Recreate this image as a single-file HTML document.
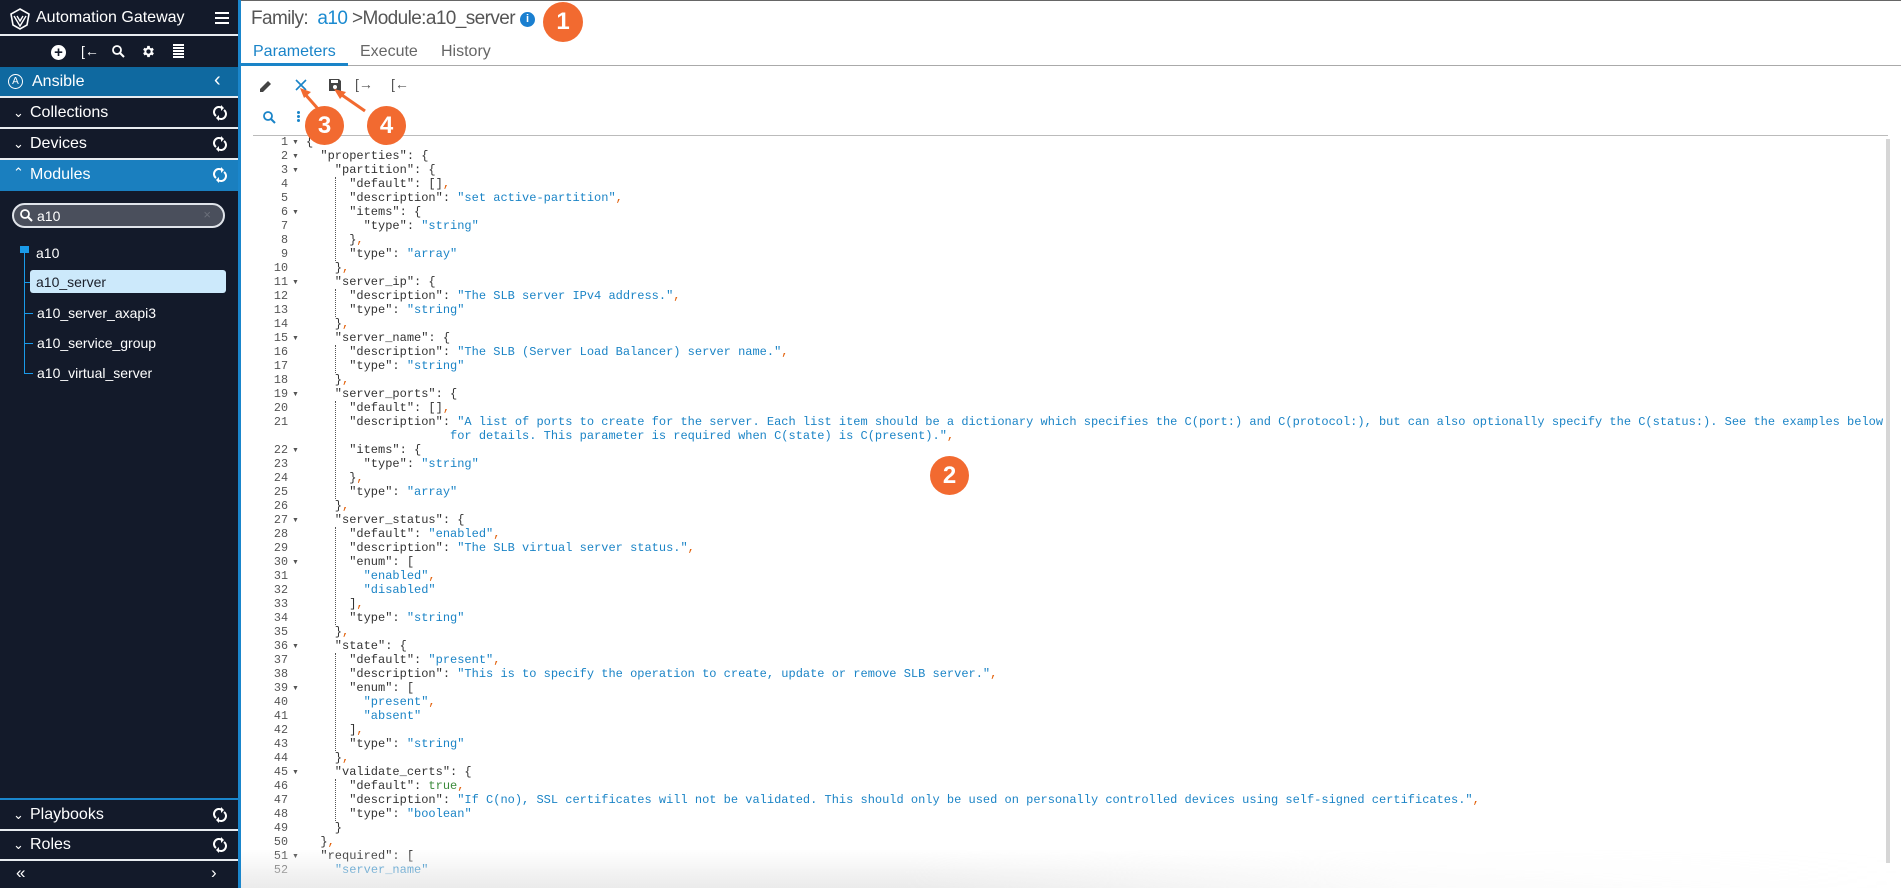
<!DOCTYPE html>
<html><head><meta charset="utf-8"><style>
*{margin:0;padding:0;box-sizing:border-box}
body{width:1901px;height:888px;overflow:hidden;background:#fff;font-family:"Liberation Sans",sans-serif;position:relative}
.sb{position:absolute;left:0;top:0;width:238px;height:888px;background:#131a2a;color:#fff}
.sbb{position:absolute;left:238px;top:0;width:3px;height:888px;background:#1a86cc}
.row{position:absolute;left:0;width:238px;height:31px;font-size:16px;line-height:29px;padding-left:30px;border-bottom:2px solid #e8ecf0}
.row .chev{position:absolute;left:13px;top:0;font-size:13px}
.row .ref{position:absolute;left:213px;top:7px}
.tree{position:absolute;font-size:14px;color:#fff}
.code{position:absolute;left:306px;top:135px;font-family:"Liberation Mono",monospace;font-size:12px;line-height:14px;white-space:pre;color:#333}
.gut{position:absolute;left:240px;top:135px;width:48px;text-align:right;font-family:"Liberation Mono",monospace;font-size:11.75px;line-height:14px;white-space:pre;color:#555}
.s{color:#1b84c6}.c{color:#e2600a}.b{color:#3a8a3a}
.fold{position:absolute;left:292px;font-size:7px;color:#555}
.guide{position:absolute;left:335px;width:0;border-left:1px dotted #555}
.ann{position:absolute;width:39px;height:39px;border-radius:50%;background:#f26a30;color:#fff;font-size:24px;font-weight:bold;text-align:center;line-height:39px}
</style></head><body>
<div class="sb">
  <div style="position:absolute;left:0;top:0;width:238px;height:36px;border-bottom:2px solid #e8ecf0">
    <svg style="position:absolute;left:10px;top:8px" width="20" height="22" viewBox="0 0 20 22"><path d="M10 1 L19 6 L17 17 L10 21 L3 17 L1 6 Z" fill="none" stroke="#fff" stroke-width="1.6"/><path d="M4 8 L10 18 L16 8 M7 8 L10 13 L13 8" fill="none" stroke="#fff" stroke-width="1.4"/></svg>
    <span style="position:absolute;left:36px;top:9px;font-size:16px">Automation Gateway</span>
    <span style="position:absolute;left:215px;top:12px;width:14px;height:2px;background:#fff;box-shadow:0 5px 0 #fff,0 10px 0 #fff"></span>
  </div>
  <div style="position:absolute;left:0;top:38px;width:238px;height:28px;font-size:14px">
    <span style="position:absolute;left:51px;top:7px;width:15px;height:15px;border-radius:50%;background:#fff;color:#131a2a;font-weight:bold;text-align:center;line-height:15px;font-size:15px">+</span>
    <span style="position:absolute;left:81px;top:5px;font-size:14px">[←</span>
    <svg style="position:absolute;left:112px;top:7px" width="13" height="13"><circle cx="5" cy="5" r="4" stroke="#fff" stroke-width="1.8" fill="none"/><path d="M8 8 L12 12" stroke="#fff" stroke-width="2"/></svg>
    <svg style="position:absolute;left:141px;top:6px" width="15" height="15" viewBox="0 0 24 24"><path fill="#fff" d="M19.4 13a7.5 7.5 0 000-2l2.1-1.6-2-3.5-2.5 1a7.3 7.3 0 00-1.7-1L15 3h-4l-.4 2.9a7.3 7.3 0 00-1.7 1l-2.5-1-2 3.5L6.6 11a7.5 7.5 0 000 2l-2.1 1.6 2 3.5 2.5-1a7.300 7.3 0 001.7 1L11 21h4l.4-2.9a7.3 7.3 0 001.7-1l2.5 1 2-3.5zM13 15.5a3.5 3.5 0 110-7 3.5 3.5 0 010 7z" transform="translate(-1 0)"/></svg>
    <span style="position:absolute;left:173px;top:6px;width:11px;height:2px;background:#fff;box-shadow:0 3px 0 #fff,0 6px 0 #fff,0 9px 0 #fff,0 12px 0 #fff"></span>
  </div>
  <div class="row" style="top:67px;background:#0f69a0;padding-left:32px">
    <span style="position:absolute;left:8px;top:7px;width:15px;height:15px;border:1px solid #fff;border-radius:50%;font-size:10px;line-height:13px;text-align:center">A</span>Ansible
    <span style="position:absolute;left:214px;top:-1px;font-size:20px">‹</span>
  </div>
  <div class="row" style="top:98px"><span class="chev">⌄</span>Collections<svg class="ref" width="14" height="16" viewBox="0 0 14 16"><path d="M3 11 A5 5 0 0 1 9 3 M11 5 A5 5 0 0 1 5 13" stroke="#fff" stroke-width="2" fill="none"/><path d="M8 0 L11 3 L8 6Z M6 10 L3 13 L6 16Z" fill="#fff"/></svg></div>
  <div class="row" style="top:129px"><span class="chev">⌄</span>Devices<svg class="ref" width="14" height="16" viewBox="0 0 14 16"><path d="M3 11 A5 5 0 0 1 9 3 M11 5 A5 5 0 0 1 5 13" stroke="#fff" stroke-width="2" fill="none"/><path d="M8 0 L11 3 L8 6Z M6 10 L3 13 L6 16Z" fill="#fff"/></svg></div>
  <div class="row" style="top:160px;background:#1a7fbf;border-bottom:none"><span class="chev" style="top:-2px">⌃</span>Modules<svg class="ref" width="14" height="16" viewBox="0 0 14 16"><path d="M3 11 A5 5 0 0 1 9 3 M11 5 A5 5 0 0 1 5 13" stroke="#fff" stroke-width="2" fill="none"/><path d="M8 0 L11 3 L8 6Z M6 10 L3 13 L6 16Z" fill="#fff"/></svg></div>
  <div style="position:absolute;left:12px;top:203px;width:213px;height:25px;border:2px solid #e0e4ea;border-radius:13px;background:#4a4f5c">
    <svg style="position:absolute;left:6px;top:4px" width="13" height="13"><circle cx="5" cy="5" r="4" stroke="#fff" stroke-width="1.8" fill="none"/><path d="M8 8 L12 12" stroke="#fff" stroke-width="2"/></svg>
    <span style="position:absolute;left:23px;top:3px;font-size:14px">a10</span>
    <span style="position:absolute;right:12px;top:2px;font-size:13px;color:#6a6f7a">×</span>
  </div>
  <div style="position:absolute;left:20px;top:246px;width:9px;height:7px;background:#1a9ae8"></div>
  <div style="position:absolute;left:24px;top:253px;width:1px;height:121px;background:#1a9ae8"></div>
  <div class="tree" style="left:36px;top:245px">a10</div>
  <div style="position:absolute;left:30px;top:270px;width:196px;height:23px;background:#cce9fb;border-radius:3px"></div>
  <div class="tree" style="left:36px;top:274px;color:#1a1f2a">a10_server</div>
  <div class="tree" style="left:37px;top:305px">a10_server_axapi3</div>
  <div class="tree" style="left:37px;top:335px">a10_service_group</div>
  <div class="tree" style="left:37px;top:365px">a10_virtual_server</div>
  <div style="position:absolute;left:24px;top:282px;width:6px;height:1px;background:#1a9ae8"></div>
  <div style="position:absolute;left:24px;top:313px;width:9px;height:1px;background:#1a9ae8"></div>
  <div style="position:absolute;left:24px;top:343px;width:9px;height:1px;background:#1a9ae8"></div>
  <div style="position:absolute;left:24px;top:373px;width:9px;height:1px;background:#1a9ae8"></div>
  <div style="position:absolute;left:0;top:798px;width:238px;height:2px;background:#1a86cc"></div>
  <div class="row" style="top:800px"><span class="chev">⌄</span>Playbooks<svg class="ref" width="14" height="16" viewBox="0 0 14 16"><path d="M3 11 A5 5 0 0 1 9 3 M11 5 A5 5 0 0 1 5 13" stroke="#fff" stroke-width="2" fill="none"/><path d="M8 0 L11 3 L8 6Z M6 10 L3 13 L6 16Z" fill="#fff"/></svg></div>
  <div class="row" style="top:830px"><span class="chev">⌄</span>Roles<svg class="ref" width="14" height="16" viewBox="0 0 14 16"><path d="M3 11 A5 5 0 0 1 9 3 M11 5 A5 5 0 0 1 5 13" stroke="#fff" stroke-width="2" fill="none"/><path d="M8 0 L11 3 L8 6Z M6 10 L3 13 L6 16Z" fill="#fff"/></svg></div>
  <span style="position:absolute;left:16px;top:863px;font-size:17px">«</span>
  <span style="position:absolute;left:211px;top:863px;font-size:17px">›</span>
</div>
<div class="sbb"></div>

<div style="position:absolute;left:241px;top:0;width:1660px;height:1px;background:#666"></div>
<div style="position:absolute;left:251px;top:8px;font-size:19px;color:#555;white-space:nowrap;letter-spacing:-0.6px">Family:&nbsp; <span style="color:#1a8ad0">a10</span> &gt;Module:a10_server</div>
<div style="position:absolute;left:520px;top:12px;width:15px;height:15px;border-radius:50%;background:#1a7fd0;color:#fff;font-size:11px;font-weight:bold;text-align:center;line-height:15px">i</div>
<div style="position:absolute;left:253px;top:43px;font-size:16px;color:#1a84c8">Parameters</div>
<div style="position:absolute;left:360px;top:43px;font-size:16px;color:#666">Execute</div>
<div style="position:absolute;left:441px;top:43px;font-size:16px;color:#666">History</div>
<div style="position:absolute;left:241px;top:65px;width:1660px;height:1px;background:#aaa"></div>
<div style="position:absolute;left:241px;top:63px;width:107px;height:3px;background:#1a84c8"></div>

<svg style="position:absolute;left:259px;top:79px" width="14" height="14" viewBox="0 0 14 14"><path d="M1 13 L1 10 L9 2 L12 5 L4 13Z" fill="#444"/></svg>
<svg style="position:absolute;left:295px;top:79px" width="12" height="12"><path d="M1 1 L11 11 M11 1 L1 11" stroke="#1a84c8" stroke-width="1.6"/></svg>
<svg style="position:absolute;left:328px;top:78px" width="14" height="14" viewBox="0 0 14 14"><path d="M1 1 H11 L13 3 V13 H1Z" fill="#444"/><rect x="3" y="2" width="7" height="3" fill="#fff"/><circle cx="7" cy="9" r="2" fill="#fff"/></svg>
<div style="position:absolute;left:355px;top:76px;font-size:14px;color:#555">[→</div>
<div style="position:absolute;left:391px;top:76px;font-size:14px;color:#555">[←</div>
<svg style="position:absolute;left:263px;top:111px" width="13" height="13"><circle cx="5" cy="5" r="4" stroke="#1a84c8" stroke-width="1.8" fill="none"/><path d="M8 8 L12 12" stroke="#1a84c8" stroke-width="2"/></svg>
<div style="position:absolute;left:297px;top:111px;width:3px;height:3px;background:#1a84c8;box-shadow:0 4px 0 #1a84c8,0 8px 0 #1a84c8;border-radius:50%"></div>
<div style="position:absolute;left:253px;top:135px;width:1635px;height:1px;background:#bbb"></div>
<div style="position:absolute;left:1886px;top:139px;width:4px;height:724px;background:#d6d6d6"></div>

<div class="gut">1
2
3
4
5
6
7
8
9
10
11
12
13
14
15
16
17
18
19
20
21

22
23
24
25
26
27
28
29
30
31
32
33
34
35
36
37
38
39
40
41
42
43
44
45
46
47
48
49
50
51
52</div>
<div class="guide" style="top:177px;height:84px"></div>
<div class="guide" style="top:289px;height:28px"></div>
<div class="guide" style="top:345px;height:28px"></div>
<div class="guide" style="top:401px;height:98px"></div>
<div class="guide" style="top:527px;height:98px"></div>
<div class="guide" style="top:653px;height:98px"></div>
<div class="guide" style="top:779px;height:42px"></div>
<div class="code">{
  "properties": {
    "partition": {
      "default": []<span class="c">,</span>
      "description": <span class="s">"set active-partition"</span><span class="c">,</span>
      "items": {
        "type": <span class="s">"string"</span>
      }<span class="c">,</span>
      "type": <span class="s">"array"</span>
    }<span class="c">,</span>
    "server_ip": {
      "description": <span class="s">"The SLB server IPv4 address."</span><span class="c">,</span>
      "type": <span class="s">"string"</span>
    }<span class="c">,</span>
    "server_name": {
      "description": <span class="s">"The SLB (Server Load Balancer) server name."</span><span class="c">,</span>
      "type": <span class="s">"string"</span>
    }<span class="c">,</span>
    "server_ports": {
      "default": []<span class="c">,</span>
      "description": <span class="s">"A list of ports to create for the server. Each list item should be a dictionary which specifies the C(port:) and C(protocol:), but can also optionally specify the C(status:). See the examples below
                    for details. This parameter is required when C(state) is C(present)."</span><span class="c">,</span>
      "items": {
        "type": <span class="s">"string"</span>
      }<span class="c">,</span>
      "type": <span class="s">"array"</span>
    }<span class="c">,</span>
    "server_status": {
      "default": <span class="s">"enabled"</span><span class="c">,</span>
      "description": <span class="s">"The SLB virtual server status."</span><span class="c">,</span>
      "enum": [
        <span class="s">"enabled"</span><span class="c">,</span>
        <span class="s">"disabled"</span>
      ]<span class="c">,</span>
      "type": <span class="s">"string"</span>
    }<span class="c">,</span>
    "state": {
      "default": <span class="s">"present"</span><span class="c">,</span>
      "description": <span class="s">"This is to specify the operation to create, update or remove SLB server."</span><span class="c">,</span>
      "enum": [
        <span class="s">"present"</span><span class="c">,</span>
        <span class="s">"absent"</span>
      ]<span class="c">,</span>
      "type": <span class="s">"string"</span>
    }<span class="c">,</span>
    "validate_certs": {
      "default": <span class="b">true</span><span class="c">,</span>
      "description": <span class="s">"If C(no), SSL certificates will not be validated. This should only be used on personally controlled devices using self-signed certificates."</span><span class="c">,</span>
      "type": <span class="s">"boolean"</span>
    }
  }<span class="c">,</span>
  "required": [
    <span class="s">"server_name"</span></div>
<div class="fold" style="top:139px">▼</div><div class="fold" style="top:153px">▼</div><div class="fold" style="top:167px">▼</div><div class="fold" style="top:209px">▼</div><div class="fold" style="top:279px">▼</div><div class="fold" style="top:335px">▼</div><div class="fold" style="top:391px">▼</div><div class="fold" style="top:447px">▼</div><div class="fold" style="top:517px">▼</div><div class="fold" style="top:559px">▼</div><div class="fold" style="top:643px">▼</div><div class="fold" style="top:685px">▼</div><div class="fold" style="top:769px">▼</div><div class="fold" style="top:853px">▼</div>
<div style="position:absolute;left:241px;top:850px;width:1660px;height:38px;background:linear-gradient(to bottom,rgba(255,255,255,0),rgba(232,232,232,0.9));-webkit-mask-image:linear-gradient(to right,#000 40%,rgba(0,0,0,0.2) 70%,rgba(0,0,0,0));"></div>

<div class="ann" style="left:543px;top:2px;width:40px;height:40px;line-height:40px">1</div>
<div class="ann" style="left:930px;top:456px">2</div>
<svg style="position:absolute;left:295px;top:85px" width="120" height="40"><path d="M9 8 L24 25" stroke="#f26a30" stroke-width="3"/><path d="M5 3 L16 7 L9 13Z" fill="#f26a30"/><path d="M44 8 L70 26" stroke="#f26a30" stroke-width="3"/><path d="M39 4 L51 7 L45 14Z" fill="#f26a30"/></svg>
<div class="ann" style="left:305px;top:106px">3</div>
<div class="ann" style="left:367px;top:106px">4</div>
</body></html>
